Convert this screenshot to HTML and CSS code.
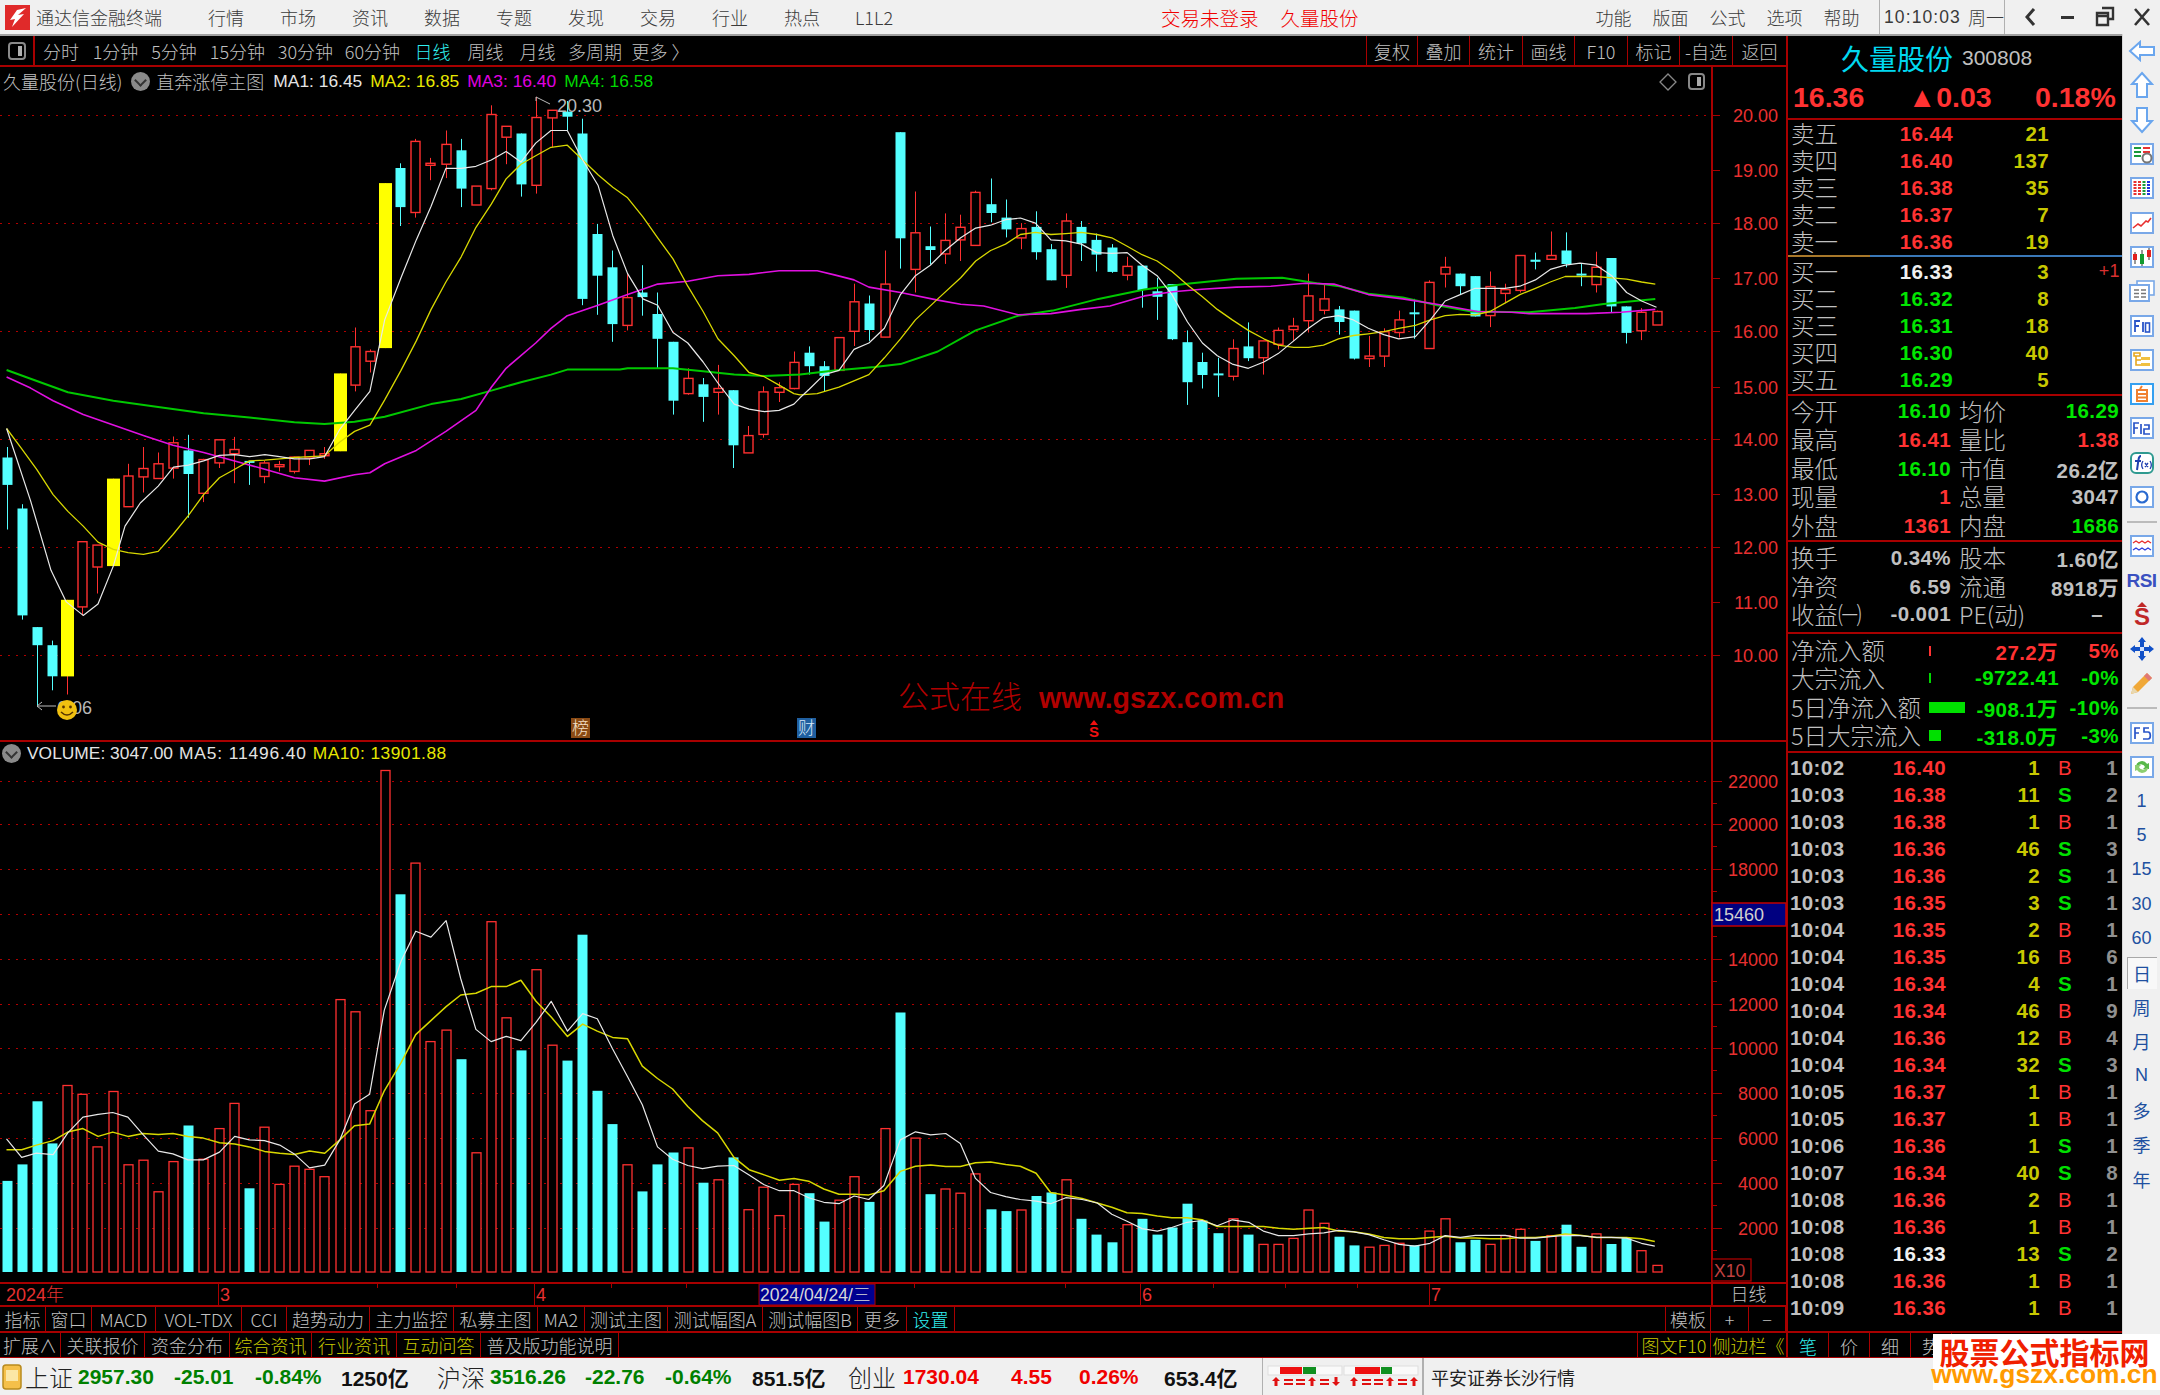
FILE: index.html
```html
<!DOCTYPE html>
<html lang="zh">
<head>
<meta charset="utf-8">
<title>通达信金融终端</title>
<link rel="stylesheet" href="styles.css">
</head>
<body>
<div class="app">
  <header class="titlebar">
    <svg class="logo" viewBox="0 0 25 25"><rect width="25" height="25" fill="#e02a2a"/><path d="M21 3 L12 5 L5 15 L10 14 L7 22 L19 9 L13 10 Z" fill="#fff"/></svg>
    <span class="appname">通达信金融终端</span>
    <nav class="menu"><span>行情</span><span>市场</span><span>资讯</span><span>数据</span><span>专题</span><span>发现</span><span>交易</span><span>行业</span><span>热点</span><span>L1L2</span></nav>
    <div class="notice"><span>交易未登录</span><span>久量股份</span></div>
    <nav class="rmenu"><span>功能</span><span>版面</span><span>公式</span><span>选项</span><span>帮助</span></nav>
    <div class="clock"><span>10:10:03</span><span class="clock-day">周一</span></div>
    <div class="winctl">
      <svg viewBox="0 0 20 24"><path d="M13 4 L6 12 L13 20" fill="none" stroke="#333" stroke-width="3"/></svg>
      <svg viewBox="0 0 20 24"><rect x="3" y="11" width="13" height="3" fill="#333"/></svg>
      <svg viewBox="0 0 20 24"><path d="M7 3h11v11h-4M2 8h11v12H2z M2 8h11v3H2z" fill="none" stroke="#333" stroke-width="2.4"/></svg>
      <svg viewBox="0 0 20 24"><path d="M3 4 L17 20 M17 4 L3 20" stroke="#333" stroke-width="2.6"/></svg>
    </div>
  </header>

  <div class="workspace">
    <section class="left">
      <div class="toolbar">
        <div class="tb-icon"><svg viewBox="0 0 18 18"><rect x="1" y="1" width="16" height="16" rx="3" fill="none" stroke="#8a8a8a" stroke-width="2"/><rect x="10" y="4" width="4" height="10" fill="#b0b0b0"/></svg></div>
        <div class="periods"><span>分时</span><span>1分钟</span><span>5分钟</span><span>15分钟</span><span>30分钟</span><span>60分钟</span><span class="on">日线</span><span>周线</span><span>月线</span><span>多周期</span><span>更多 〉</span></div>
        <div class="tb-right"><span>复权</span><span>叠加</span><span>统计</span><span>画线</span><span>F10</span><span>标记</span><span>-自选</span><span>返回</span></div>
      </div>

      <div class="pane pane-main">
        <svg id="mainChart" class="chart" viewBox="0 67 1786 673"></svg>
        <div class="legend">
          <span class="stock">久量股份(日线)</span>
          <i class="dot"></i>
          <span class="stock formula">直奔涨停主图</span>
          <span class="ma c-w">MA1: 16.45</span><span class="ma c-y">MA2: 16.85</span><span class="ma c-m">MA3: 16.40</span><span class="ma c-g">MA4: 16.58</span>
        </div>
      </div>

      <div class="pane pane-vol">
        <svg id="volChart" class="chart" viewBox="0 740 1786 542"></svg>
        <div class="legend legend-vol">
          <i class="dot"></i>
          <span class="ma c-w">VOLUME: 3047.00</span><span class="ma c-w wider">MA5: 11496.40</span><span class="ma c-y wide">MA10: 13901.88</span>
        </div>
      </div>

      <svg id="timeAxis" class="time-axis" viewBox="0 1282 1786 23"></svg>

      <div class="tabrow tabs-a">
        <span>指标</span><span>窗口</span><span>MACD</span><span>VOL-TDX</span><span>CCI</span><span>趋势动力</span><span>主力监控</span><span>私募主图</span><span>MA2</span><span>测试主图</span><span>测试幅图A</span><span>测试幅图B</span><span>更多</span><span class="on">设置</span><span class="blank"></span><span>模板</span><span>+</span><span>−</span>
      </div>
      <div class="tabrow tabs-b">
        <span>扩展∧</span><span>关联报价</span><span>资金分布</span><span class="yl">综合资讯</span><span class="yl">行业资讯</span><span class="yl">互动问答</span><span>普及版功能说明</span><span class="blank"></span><span class="yl">图文F10</span><span class="yl last">侧边栏《</span>
      </div>
    </section>

    <aside class="quote">
      <div class="stock-head">
        <div class="name-row"><span class="q-name">久量股份</span><span class="q-code">300808</span></div>
        <div class="price-row"><span>16.36</span><span>▲0.03</span><span>0.18%</span></div>
      </div>

      <div class="book">
        <div class="brow"><b>卖五</b><span class="r">16.44</span><span class="q">21</span></div>
        <div class="brow"><b>卖四</b><span class="r">16.40</span><span class="q">137</span></div>
        <div class="brow"><b>卖三</b><span class="r">16.38</span><span class="q">35</span></div>
        <div class="brow"><b>卖二</b><span class="r">16.37</span><span class="q">7</span></div>
        <div class="brow"><b>卖一</b><span class="r">16.36</span><span class="q">19</span></div>
      </div>
      <div class="book-sep"><i></i><i></i></div>
      <div class="book book-buy">
        <div class="brow"><b>买一</b><span class="w">16.33</span><span class="q">3</span><span class="delta">+1</span></div>
        <div class="brow"><b>买二</b><span class="g">16.32</span><span class="q">8</span></div>
        <div class="brow"><b>买三</b><span class="g">16.31</span><span class="q">18</span></div>
        <div class="brow"><b>买四</b><span class="g">16.30</span><span class="q">40</span></div>
        <div class="brow"><b>买五</b><span class="g">16.29</span><span class="q">5</span></div>
      </div>

      <div class="stats">
        <div class="srow"><b>今开</b><span class="g">16.10</span><b>均价</b><span class="g">16.29</span></div>
        <div class="srow"><b>最高</b><span class="r">16.41</span><b>量比</b><span class="r">1.38</span></div>
        <div class="srow"><b>最低</b><span class="g">16.10</span><b>市值</b><span class="n">26.2亿</span></div>
        <div class="srow"><b>现量</b><span class="r">1</span><b>总量</b><span class="n">3047</span></div>
        <div class="srow"><b>外盘</b><span class="r">1361</span><b>内盘</b><span class="g">1686</span></div>
      </div>
      <div class="stats stats-b">
        <div class="srow"><b>换手</b><span class="n">0.34%</span><b>股本</b><span class="n">1.60亿</span></div>
        <div class="srow"><b>净资</b><span class="n">6.59</span><b>流通</b><span class="n">8918万</span></div>
        <div class="srow"><b class="nowrap">收益㈠</b><span class="n">-0.001</span><b class="nowrap">PE(动)</b><span class="n none">–</span></div>
      </div>

      <div class="flows">
        <div class="frow"><b>净流入额</b><i class="bar bar-r1"></i><span class="r">27.2万</span><span class="r">5%</span></div>
        <div class="frow"><b>大宗流入</b><i class="bar bar-g1"></i><span class="g">-9722.41</span><span class="g">-0%</span></div>
        <div class="frow"><b>5日净流入额</b><i class="bar bar-g2"></i><span class="g">-908.1万</span><span class="g">-10%</span></div>
        <div class="frow"><b>5日大宗流入</b><i class="bar bar-g3"></i><span class="g">-318.0万</span><span class="g">-3%</span></div>
      </div>

      <div class="trades" id="trades"></div>

      <div class="q-tabs"><span class="on">笔</span><span>价</span><span>细</span><span>势</span></div>
    </aside>

    <aside class="side">
      <div class="si"><svg width="28" height="22" viewBox="0 0 28 22"><path class="ar" d="M2 11 L12 2 V7 H26 V15 H12 V20 Z"/></svg></div>
      <div class="si"><svg width="24" height="28" viewBox="0 0 24 28"><path class="ar" d="M12 2 L22 13 H17 V26 H7 V13 H2 Z"/></svg></div>
      <div class="si"><svg width="24" height="28" viewBox="0 0 24 28"><path class="ar" d="M12 26 L22 15 H17 V2 H7 V15 H2 Z"/></svg></div>
      <div class="si"><svg width="24" height="24" viewBox="0 0 24 24"><rect class="box" x="1" y="2" width="22" height="20"/><path d="M4 6h7M4 10h7M4 14h7" stroke="#1a9a3a" stroke-width="2"/><path d="M13 6h7M13 10h7" stroke="#e83030" stroke-width="2"/><circle cx="17" cy="16" r="4.5" fill="none" stroke="#777" stroke-width="2"/></svg></div>
      <div class="si"><svg width="24" height="24" viewBox="0 0 24 24"><rect class="box" x="1" y="2" width="22" height="20"/><path d="M5 5v14" stroke="#e83030" stroke-width="3" stroke-dasharray="2 1"/><path d="M9.5 5v14" stroke="#e83030" stroke-width="3" stroke-dasharray="2 1"/><path d="M14 5v14" stroke="#1a9a3a" stroke-width="3" stroke-dasharray="2 1"/><path d="M18.5 5v14" stroke="#2030e0" stroke-width="3" stroke-dasharray="2 1"/></svg></div>
      <div class="si"><svg width="24" height="24" viewBox="0 0 24 24"><rect class="box" x="1" y="2" width="22" height="20"/><path d="M3 17 L8 13 L11 15 L16 10 L18 11 L21 7" fill="none" stroke="#e83030" stroke-width="1.6"/></svg></div>
      <div class="si"><svg width="24" height="24" viewBox="0 0 24 24"><rect class="box" x="1" y="2" width="22" height="20"/><path d="M5 7v12M12 5v16M19 3v12" stroke="#333" stroke-width="1"/><rect x="3" y="9" width="4" height="6" fill="#e02020"/><rect x="10" y="9" width="4" height="10" fill="#129a30"/><rect x="17" y="5" width="4" height="7" fill="#e02020"/></svg></div>
      <div class="si"><svg width="26" height="22" viewBox="0 0 26 22"><rect x="8" y="1" width="17" height="14" fill="#fff" stroke="#79a8e8" stroke-width="1.6"/><rect class="box" x="1" y="5" width="19" height="16"/><path d="M5 10h5M12 10h5M5 13.5h5M12 13.5h5M5 17h5M12 17h5" stroke="#777" stroke-width="1.6"/></svg></div>
      <div class="si"><svg width="24" height="24" viewBox="0 0 24 24"><rect class="box" x="1" y="2" width="22" height="20"/><path d="M5 18V7h5M5 12h4M13 8v10" fill="none" stroke="#2a55c8" stroke-width="1.8"/><rect x="15.5" y="9" width="4" height="9" fill="none" stroke="#2a55c8" stroke-width="1.6"/></svg></div>
      <div class="si"><svg width="24" height="24" viewBox="0 0 24 24"><rect class="box" x="1" y="2" width="22" height="20"/><path d="M4 5h6v3H4zM6 8v9h5M6 12h5" fill="none" stroke="#e8a820" stroke-width="1.6"/><rect x="11" y="9" width="9" height="3" fill="#f0c040"/><rect x="11" y="15" width="9" height="3" fill="#f0c040"/></svg></div>
      <div class="si"><svg width="24" height="24" viewBox="0 0 24 24"><rect x="1" y="2" width="22" height="20" fill="#fff" stroke="#35a0f0" stroke-width="2"/><path d="M12 4 L10 7 M7 8h10v11H7zM7 12h10M7 15.5h10" fill="none" stroke="#f08030" stroke-width="2"/></svg></div>
      <div class="si"><svg width="24" height="24" viewBox="0 0 24 24"><rect class="box" x="1" y="2" width="22" height="20"/><path d="M4 18V7h5M4 12h4M11 8v10M14 9h5v4h-5v5h6" fill="none" stroke="#2a55c8" stroke-width="1.7"/></svg></div>
      <div class="si"><svg width="24" height="24" viewBox="0 0 24 24"><rect x="1" y="2" width="22" height="20" rx="5" fill="#fff" stroke="#2f9a90" stroke-width="2"/><path d="M11 5C8 5 9 8 8 12L7 19M5 10h6" fill="none" stroke="#2040b0" stroke-width="2"/><path d="M13 10c-2 3-2 5 0 8M20 10c2 3 2 5 0 8M15 12l3 4M18 12l-3 4" fill="none" stroke="#2040b0" stroke-width="1.3"/></svg></div>
      <div class="si"><svg width="24" height="24" viewBox="0 0 24 24"><rect class="box" x="1" y="2" width="22" height="20"/><circle cx="12" cy="12" r="5.5" fill="none" stroke="#2a6ad0" stroke-width="2.2"/></svg></div>
      <div class="side-sep"></div>
      <div class="si"><svg width="24" height="22" viewBox="0 0 24 22"><rect class="box" x="1" y="1" width="22" height="20"/><path d="M3 8l3-2 3 2 3-2 3 2 3-2 3 2" fill="none" stroke="#e83030" stroke-width="1.4"/><path d="M3 15l3-2 3 2 3-2 3 2 3-2 3 2" fill="none" stroke="#3040e0" stroke-width="1.4"/></svg></div>
      <div class="si si-rsi">RSI</div>
      <div class="si"><svg width="22" height="28" viewBox="0 0 22 28"><path d="M11 1 L16 6 H6 Z" fill="#c02828"/><text x="11" y="24" class="dollar">S</text></svg></div>
      <div class="si"><svg width="24" height="24" viewBox="0 0 24 24"><path d="M12 0 L16 5 H14 V10 H19 V8 L24 12 L19 16 V14 H14 V19 H16 L12 24 L8 19 H10 V14 H5 V16 L0 12 L5 8 V10 H10 V5 H8 Z" fill="#1050c8"/><rect x="10" y="10" width="4" height="4" fill="#cfe0ff"/></svg></div>
      <div class="si"><svg width="24" height="24" viewBox="0 0 24 24"><path d="M1 23 L3 16 L17 2 L22 7 L8 21 Z" fill="#f0a838"/><path d="M17 2 L22 7 L19 10 L14 5 Z" fill="#e07878"/><path d="M1 23 L3 16 L8 21 Z" fill="#e8d8b0"/></svg></div>
      <div class="side-sep"></div>
      <div class="si"><svg width="24" height="24" viewBox="0 0 24 24"><rect class="box" x="1" y="2" width="22" height="20"/><path d="M5 18V7h5M5 12h4M19 7h-5v4h4a2 3 0 0 1 0 7h-5" fill="none" stroke="#2a55c8" stroke-width="1.7"/></svg></div>
      <div class="si"><svg width="24" height="22" viewBox="0 0 24 22"><rect class="box" x="1" y="1" width="22" height="20"/><path d="M6 10a6 6 0 0 1 11-2l2-1v6h-6l2-2a4 4 0 0 0-7-1z" fill="#58b84a"/><path d="M18 12a6 6 0 0 1-11 2l-2 1V9h6L9 11a4 4 0 0 0 7 1z" fill="#8ccf70"/></svg></div>
      <div class="si t">1</div><div class="si t">5</div><div class="si t">15</div><div class="si t">30</div><div class="si t">60</div>
      <div class="si t active"><span>日</span></div>
      <div class="si t">周</div><div class="si t">月</div><div class="si t">N</div><div class="si t">多</div><div class="si t">季</div><div class="si t">年</div>
    </aside>
  </div>

  <footer class="status">
    <svg class="st-icon" viewBox="0 0 20 26"><rect x="1" y="1" width="18" height="24" rx="3" fill="#f5c04a" stroke="#b88a1e" stroke-width="1.5"/><rect x="4" y="6" width="12" height="11" fill="#fbe7a6"/></svg>
    <div class="tick">
      <span class="l">上证</span><span class="gn">2957.30</span><span class="gn">-25.01</span><span class="gn">-0.84%</span><span class="bk">1250亿</span>
      <span class="l">沪深</span><span class="gn">3516.26</span><span class="gn">-22.76</span><span class="gn">-0.64%</span><span class="bk">851.5亿</span>
      <span class="l">创业</span><span class="rd">1730.04</span><span class="rd">4.55</span><span class="rd">0.26%</span><span class="bk">653.4亿</span>
    </div>
    <svg class="mini" viewBox="0 0 162 37">
      <defs>
        <path id="mu" d="M4 0l4 4H5.5v5h-3V4H0z" fill="#e01010"/>
        <path id="md" d="M4 9l4-4H5.5V0h-3v5H0z" fill="#e01010"/>
        <path id="me" d="M0 2h9v2H0zM0 6h9v2H0z" fill="#e01010"/>
      </defs>
      <path d="M0 0V37M161 0V37" stroke="#9a9a9a" stroke-width="1.5"/>
      <rect x="6" y="8" width="74" height="9" fill="#fafafa" stroke="#ddd"/><rect x="18" y="9" width="22" height="7" fill="#ee1010"/><rect x="41" y="9" width="13" height="7" fill="#109020"/>
      <rect x="82" y="8" width="74" height="9" fill="#fafafa" stroke="#ddd"/><rect x="93" y="9" width="25" height="7" fill="#ee1010"/><rect x="119" y="9" width="11" height="7" fill="#109020"/>
      <use href="#mu" x="10" y="19"/><use href="#me" x="22" y="19"/><use href="#me" x="34" y="19"/><use href="#mu" x="46" y="19"/><use href="#me" x="58" y="19"/><use href="#md" x="70" y="19"/>
      <use href="#mu" x="88" y="19"/><use href="#me" x="100" y="19"/><use href="#me" x="112" y="19"/><use href="#mu" x="124" y="19"/><use href="#me" x="136" y="19"/><use href="#mu" x="148" y="19"/>
    </svg>
    <span class="broker">平安证券长沙行情</span>
  </footer>

  <div class="brand">
    <span class="brand-cn">股票公式指标网</span>
    <span class="brand-en">www.gszx.com.cn</span>
  </div>
</div>
<script src="app.js"></script>
</body>
</html>
```
FILE: styles.css
```css
*{box-sizing:border-box;margin:0;padding:0}
html,body{width:2160px;height:1395px;overflow:hidden;background:#f0f0f0}
body{font-family:"Noto Sans CJK SC","Liberation Sans",sans-serif;font-weight:300;font-size:18px;color:#c0c0c0}
b,i{font-style:normal;font-weight:300}
.app{position:relative;width:2160px;height:1395px;display:flex;flex-direction:column}

/* title bar */
.titlebar{height:36px;flex:none;display:flex;align-items:center;background:#f0f0f0;border-bottom:2px solid #a0a0a0;color:#3a3a3a;white-space:nowrap;font-size:18px}
.logo{width:25px;height:25px;margin-left:5px;flex:none}
.appname{margin-left:6px;width:126px}
.menu{margin-left:28px;display:grid;grid-template-columns:repeat(10,72px);text-align:center}
.notice{margin-left:251px;display:flex;gap:22px;color:#f00000;font-size:19.5px}
.rmenu{margin-left:auto;padding-right:9px;display:grid;grid-template-columns:repeat(5,57px);text-align:center}
.clock{width:126px;height:34px;display:flex;align-items:center;gap:7px;padding-left:4px;border-left:1px solid #b0b0b0;border-right:1px solid #b0b0b0;font-family:"Liberation Sans","Noto Sans CJK SC",sans-serif;font-size:17.5px;letter-spacing:1.1px;font-weight:400}
.clock-day{font-family:"Noto Sans CJK SC",sans-serif;letter-spacing:0;font-size:18px;font-weight:300}
.winctl{width:155px;display:grid;grid-template-columns:repeat(4,37px);justify-items:center;padding-left:7px}
.winctl svg{width:20px;height:24px}

/* layout */
.workspace{height:1322px;flex:none;display:flex;background:#000}
.left{width:1786px;display:flex;flex-direction:column;flex:none;background:#000}
.toolbar{height:31px;flex:none;display:flex;align-items:stretch;border-bottom:2px solid #a80000;white-space:nowrap}
.tb-icon{width:35px;display:flex;align-items:center;justify-content:center;border-right:2px solid #a80000}
.tb-icon svg{width:18px;height:18px}
.periods{display:grid;grid-template-columns:52px 57px 60px 67px 69px 65px 55px 51px 53px 62px 69px;text-align:center;align-items:center}
.periods .on{color:#30f0f0}
.tb-right{margin-left:auto;display:grid;grid-template-columns:51px 52px 53px 52px 53px 52px 53px 54px;text-align:center}
.tb-right span{border-left:1px solid #a80000;display:flex;align-items:center;justify-content:center}

/* chart panes */
.pane{position:relative;flex:none}
.pane-main{height:673px}
.pane-vol{height:542px}
.chart{display:block;width:1786px;height:100%;overflow:visible}
.legend{position:absolute;left:3px;top:0;height:28px;display:flex;align-items:center;white-space:nowrap}
.legend .stock{font-size:18px}
.legend .dot,.legend-vol .dot{width:19px;height:19px;border-radius:50%;background:#8a8a8a;margin:0 6px 0 9px;position:relative;flex:none}
.legend .dot::after{content:"";position:absolute;left:5px;top:4px;width:7px;height:7px;border-right:2px solid #333;border-bottom:2px solid #333;transform:rotate(45deg)}
.legend .formula{margin-right:9px}
.ma{font:400 17.4px "Liberation Sans",sans-serif;margin-right:8px}
.ma.wide{letter-spacing:.45px}
.ma.wider{letter-spacing:.85px}
.legend-vol{left:0;height:26px;top:0}
.legend-vol .ma{margin-right:6px}
.legend-vol .dot{margin:0 6px 0 2px}
.c-w{color:#e4e4e4}.c-y{color:#e8e800}.c-m{color:#e000e0}.c-g{color:#00d800}
.time-axis{display:block;width:1786px;height:23px;flex:none;overflow:visible}

/* bottom tabs */
.tabrow{display:grid;white-space:nowrap;text-align:center;align-items:stretch;border-top:2px solid #a80000;flex:none}
.tabrow span{display:flex;align-items:center;justify-content:center;border-right:1px solid #a80000;overflow:hidden}
.tabrow .blank{border-right:1px solid #a80000}
.tabrow .on{color:#30f0f0}
.tabrow .yl{color:#c8c800}
.tabs-a{height:26px;grid-template-columns:46px 46px 64px 86px 45px 83px 84px 84px 47px 83px 95px 95px 49px 48px 711px 45px 38px 37px}
.tabs-b{height:27px;border-bottom:1px solid #a80000;grid-template-columns:61px 84px 85px 82px 85px 84px 138px 1019px 73px 75px}
.tabs-b .last{border-right:0}

/* quote panel */
.quote{width:336px;flex:none;display:flex;flex-direction:column;border-left:2px solid #a80000;background:#000;white-space:nowrap}
.stock-head{height:84px;flex:none;border-bottom:2px solid #a80000;font-family:"Liberation Sans","Noto Sans CJK SC",sans-serif}
.name-row{height:44px;display:flex;align-items:center;padding-left:53px;gap:9px}
.q-name{font:400 28px "Noto Sans CJK SC",sans-serif;color:#00d8f0}
.q-code{font-size:21px;color:#c0c0c0;font-weight:400}
.price-row{height:35px;display:grid;grid-template-columns:115px 127px auto;align-items:center;padding-left:5px;color:#ff3232;font-weight:700;font-size:28.5px}
.book{display:flex;flex-direction:column;flex:none}
.book-buy{padding:1px 0}
.brow,.srow,.frow,.trow{display:grid;align-items:center;font:700 20.5px "Liberation Sans","Noto Sans CJK SC",sans-serif;letter-spacing:.4px}
.brow b,.srow b,.frow b{font:300 23.5px "Noto Sans CJK SC",sans-serif;color:#c0c0c0;letter-spacing:0;line-height:1}
.brow{height:27px;flex:none;grid-template-columns:56px 106px 96px 71px;padding-left:3px}
.brow span,.srow span,.frow span{text-align:right}
.book-sep{height:2px;display:grid;grid-template-columns:82px 1fr;flex:none}
.book-sep i:first-child{background:#a8782a}
.book-sep i:last-child{background:#3a78b8}
.stats{border-top:2px solid #a80000;padding-top:1px;display:flex;flex-direction:column;flex:none}
.srow{height:28.6px;flex:none;grid-template-columns:52px 108px 8px 52px 108px;padding-left:3px}
.srow b:nth-of-type(2){grid-column:4}
.stats-b{padding-bottom:3px}
.stats b.nowrap{white-space:nowrap;overflow:visible}
.n.none{padding-right:16px}
.flows{border-top:2px solid #a80000;border-bottom:2px solid #a80000;padding:2px 0;flex:none}
.frow{height:28.4px;grid-template-columns:138px 46px 83px 61px;padding-left:3px}
.bar{display:block}
.bar-r1{width:2px;height:10px;background:#ff3232}
.bar-g1{width:2px;height:10px;background:#00d800}
.bar-g2{width:36px;height:11px;background:#00e000}
.bar-g3{width:12px;height:11px;background:#00e000}
.r{color:#ff3232}.g{color:#00e600}.w{color:#f0f0f0}.q{color:#c8c800}.n{color:#c0c0c0}
.delta{font-weight:400;font-size:18px;color:#d83030}
.trades{flex:1;display:flex;flex-direction:column;min-height:0;padding-top:1px}
.trow{height:27px;flex:none;grid-template-columns:60px 96px 94px 17px 16px auto;padding-left:2px}
.trow .tm{color:#c0c0c0}
.trow .pr{text-align:right}
.trow .qt{text-align:right;color:#c8c800}
.trow .bs{grid-column:5;text-align:center}
.trow .bs-b{color:#ff3232;font-weight:400}
.trow .bs-s{color:#00e000}
.trow .cn{text-align:right;color:#909090;padding-right:4px}
.q-tabs{height:27px;flex:none;display:grid;grid-template-columns:repeat(4,41px) 1fr;border-top:2px solid #a80000;border-bottom:1px solid #a80000;text-align:center;font-size:18px}
.q-tabs span{border-right:1px solid #a80000;display:flex;align-items:center;justify-content:center}
.q-tabs .on{color:#30f0f0}

/* side strip */
.side{width:38px;flex:none;margin-top:-2px;background:#f0f0f0;display:flex;flex-direction:column;align-items:center;color:#2050a0;border-left:1px solid #d8d8d8}
.si{height:34.3px;width:100%;display:flex;align-items:center;justify-content:center;flex:none}
.side-sep{height:15px;flex:none;width:30px;background:linear-gradient(#bbb,#bbb) center/100% 2px no-repeat}
.ar{fill:#fff;stroke:#6aa6ee;stroke-width:2}
.box{fill:#fff;stroke:#79a8e8;stroke-width:2}
.si-rsi{font:700 19px "Liberation Sans",sans-serif;color:#3a50c0;letter-spacing:-.5px}
.dollar{font:700 24px "Liberation Sans",sans-serif;fill:#c02828;text-anchor:middle}
.si.t{font:400 18px "Liberation Sans","Noto Sans CJK SC",sans-serif}
.active span{width:30px;height:32px;display:flex;align-items:center;justify-content:center;background:#f8f8f8;border-top:1px solid #a8a8a8;border-left:1px solid #a8a8a8}

/* status */
.status{height:37px;flex:none;display:flex;align-items:center;background:#f0f0f0;white-space:nowrap;position:relative}
.st-icon{width:20px;height:26px;margin-left:2px;flex:none}
.tick{margin-left:3px;display:grid;grid-template-columns:53px 96px 81px 86px 96px 53px 95px 80px 87px 96px 55px 108px 68px 85px 98px;align-items:center;font:700 21px "Liberation Sans","Noto Sans CJK SC",sans-serif}
.tick .l{font:300 24px "Noto Sans CJK SC",sans-serif;color:#222}
.gn{color:#008000}.rd{color:#f00000}.bk{color:#111}
.mini{width:162px;height:37px;flex:none}
.broker{margin-left:7px;color:#222;font-size:18px;font-weight:400}
.brand{position:absolute;right:0;bottom:5px;width:227px;height:56px;padding:2px 4px 0 0;background:#fff;display:flex;flex-direction:column;align-items:center;line-height:1}
.brand-cn{font:700 30px/30px "Noto Sans CJK SC",sans-serif;color:#f02000;white-space:nowrap}
.brand-en{font:700 26.4px/16px "Liberation Sans",sans-serif;color:#ff9a00;white-space:nowrap}
```
FILE: app.js
```js
var RED='#ff3030',CY='#54ffff',YL='#ffff00',LINE='#a80000';
function my(p){return 80+p/2.376}
function vy(p){return 740+p/2.851}
function cx(i){return Math.round(6.6+15.137*i)+.5}
function m7(a){var o=[];for(var i=0;i<a.length;i+=2)o.push((a[i]/1.96).toFixed(1)+','+my(a[i+1]).toFixed(1));return o}
function m8(a){var o=[];for(var i=0;i<a.length;i+=2)o.push((800+a[i]/1.742).toFixed(1)+','+my(a[i+1]).toFixed(1));return o}
function v9(a){var o=[];for(var i=0;i<a.length;i+=2)o.push((a[i]/1.845).toFixed(1)+','+vy(a[i+1]).toFixed(1));return o}
function v10(a){var o=[];for(var i=0;i<a.length;i+=2)o.push((850+a[i]/1.65).toFixed(1)+','+vy(a[i+1]).toFixed(1));return o}
function poly(pts,c,w){return '<polyline points="'+pts.join(' ')+'" fill="none" stroke="'+c+'" stroke-width="'+w+'" stroke-linejoin="round"/>'}

var candles=[
['c',872,897,962,1068],['c',1008,1018,1272,1282],['c',1300,1300,1343,1490],['c',1332,1343,1417,1450],['y',1235,1235,1417,1460],
['r',1097,1097,1252,1272],['r',1105,1105,1157,1220],['y',947,947,1155,1155],['r',912,941,1014,1014],['r',872,923,943,980],
['r',885,912,947,947],['r',847,862,922,947],['c',843,880,936,1040],['r',900,902,982,1003],['r',855,855,910,922],
['r',848,878,888,958],['c',905,905,908,962],['r',905,910,942,958],['r',905,914,916,930],['r',895,896,930,935],
['r',880,880,898,915],['r',872,888,890,900],['y',697,697,882,882],['r',588,634,725,740],['r',640,645,668,695],
['y',245,245,637,637],['c',198,209,302,347],['r',140,146,315,327],['r',185,198,200,238],['r',120,153,200,233],
['c',140,167,258,302],['r',252,252,297,297],['r',60,82,258,262],['r',110,110,136,200],['c',127,127,248,277],
['r',40,89,250,270],['r',72,72,90,160],['c',50,75,87,120],['c',92,127,520,535],['c',342,366,465,558],
['c',405,445,580,622],['r',462,517,583,595],['c',440,505,516,560],['c',505,556,615,685],['c',622,622,762,795],
['r',685,709,745,748],['c',708,723,753,812],['r',677,733,742,795],['c',737,737,868,922],['r',822,845,886,886],
['r',728,741,842,850],['r',718,731,742,765],['r',645,671,733,735],
['c',633,648,680,700],['c',668,680,703,740],['r',612,612,690,690],['r',484,527,597,632],['c',512,531,594,620],
['r',405,485,611,611],['c',124,124,376,448],['r',265,363,450,505],['c',348,395,404,438],['r',317,381,413,437],
['r',320,350,380,430],['r',263,267,393,393],['c',234,295,316,338],['c',284,327,355,374],['r',340,353,375,402],
['c',312,349,409,427],['c',390,402,476,476],['r',317,335,464,494],['c',335,349,388,430],['c',365,380,415,455],
['c',390,398,456,458],['r',420,443,464,476],['c',441,441,499,541],['c',470,502,515,570],['c',485,485,616,618],
['c',595,623,718,772],['c',648,670,701,733],['c',660,697,700,753],['r',616,638,704,714],['c',576,633,661,668],
['r',620,620,660,700],['r',588,595,628,640],['r',565,585,593,620],['r',460,513,572,600],['r',484,520,547,557],
['c',537,545,575,605],['c',548,548,662,664],['r',608,656,662,682],['r',590,598,656,682],['r',548,570,600,612],
['c',520,552,554,615],['r',476,481,638,638],['r',420,445,461,493],['c',460,460,490,510],['c',466,466,562,562],
['r',455,491,560,587],['r',484,498,507,530],['r',417,417,500,505],['c',410,427,432,450],['r',360,417,426,426],
['c',362,405,437,445],['c',435,460,462,490],['r',408,445,486,505],['c',423,423,538,552],['c',538,538,601,626],
['r',542,552,596,618],['r',548,550,582,582]];

var ma1=m7([13,828,60,1000,100,1165,130,1240,163,1272,192,1245,222,1155,245,1060,275,1005,310,965,340,920,369,915,399,905,430,892,460,890,489,895,519,890,548,895,577,900,607,900,636,895,666,830,695,785,725,740,754,570,786,470,816,380,845,300,874,210,904,210,933,205,963,190,992,170,1021,195,1050,150,1080,120,1112,120,1142,190,1172,250,1201,370,1230,460,1260,520,1289,535,1319,600,1348,625,1378,670,1407,720,1439,770,1468,782,1498,788,1527,785,1556,770])
.concat(m8([0,755,16,735,42,700,68,690,94,640,120,625,147,590,175,510,201,465,227,440,253,405,280,375,306,352,332,345,358,332,384,328,410,340,437,380,463,382,490,390,517,410,543,412,570,410,596,440,622,465,648,510,675,575,701,625,727,655,753,675,781,685,808,670,833,650,860,620,886,590,912,565,938,560,964,570,990,590,1017,605,1043,615,1072,610,1098,570,1124,525,1150,510,1176,495,1202,495,1228,495,1254,490,1281,475,1307,450,1333,440,1359,435,1387,440,1414,465,1440,505,1466,525,1492,540]));
var ma2=m7([13,828,42,875,72,925,104,985,133,1025,163,1060,192,1098,222,1115,251,1123,281,1127,310,1120,339,1080,369,1035,399,985,430,945,460,925,489,905,519,903,548,900,577,897,607,895,636,893,666,860,695,835,725,820,754,760,786,690,816,620,845,545,874,480,904,420,933,350,963,295,992,235,1021,200,1050,180,1080,160,1112,155,1142,190,1172,225,1201,255,1230,280,1260,325,1289,375,1319,425,1348,490,1378,550,1407,615,1439,655,1468,695,1498,705,1527,725,1556,745])
.concat(m8([0,748,30,745,68,730,120,700,147,660,175,615,201,570,240,520,280,470,306,430,332,405,358,390,384,367,410,362,437,367,463,365,490,362,517,367,543,375,570,395,596,415,622,430,648,455,675,487,701,515,727,545,753,570,781,595,808,615,833,630,860,635,886,635,912,630,938,615,964,607,990,603,1017,598,1043,590,1072,583,1098,570,1124,560,1150,557,1176,558,1202,550,1228,530,1254,510,1281,495,1307,480,1333,467,1359,467,1387,467,1414,470,1440,473,1466,480,1490,485]));
var ma3=m7([13,706,60,732,104,762,163,795,222,820,281,845,339,868,399,885,460,905,519,925,577,945,636,953,695,938,725,933,754,912,816,880,874,835,933,785,963,730,992,685,1050,625,1080,590,1112,560,1172,535,1230,510,1289,485,1348,478,1407,465,1468,462,1527,453,1568,453])
.concat(m8([30,453,60,463,94,475,120,492,175,505,240,523,280,533,320,537,380,558,437,555,490,545,540,537,600,513,650,503,700,497,760,492,820,490,880,483,930,485,990,510,1050,520,1120,535,1180,550,1240,552,1270,555,1370,555,1430,552,1490,545]));
var ma4=m7([13,689,60,710,133,742,222,762,310,777,399,792,489,802,577,813,636,817,695,812,754,800,845,770,904,758,963,738,1021,718,1080,700,1112,688,1215,688,1230,685,1319,685,1378,692,1439,700,1498,703,1568,700])
.concat(m8([60,690,130,682,175,675,240,645,306,595,380,560,440,548,520,520,600,498,670,485,760,472,840,470,900,483,940,490,990,508,1050,517,1110,535,1170,550,1270,552,1350,542,1400,532,1490,520]));

function drawMain(){
  var h='';
  var grid=[115,223,331,439,547,655];
  grid.forEach(function(y){h+='<line x1="0" x2="1711" y1="'+y+'.5" y2="'+y+'.5" stroke="#b00000" stroke-dasharray="2 6"/>'});
  candles.forEach(function(c,i){
    var x=cx(i),col=c[0]=='c'?CY:RED,top=my(c[2]),bot=my(c[3]);
    var wk=c[0]=='y'?RED:col;
    h+='<line x1="'+x+'" x2="'+x+'" y1="'+my(c[1]).toFixed(1)+'" y2="'+my(c[4]).toFixed(1)+'" stroke="'+wk+'"/>';
    var ht=Math.max(bot-top,2).toFixed(1);
    if(c[0]=='c')h+='<rect x="'+(x-5)+'" y="'+top.toFixed(1)+'" width="10" height="'+ht+'" fill="'+CY+'"/>';
    else if(c[0]=='y')h+='<rect x="'+(x-6.5)+'" y="'+top.toFixed(1)+'" width="13" height="'+ht+'" fill="'+YL+'"/>';
    else h+='<rect x="'+(x-4.5)+'" y="'+top.toFixed(1)+'" width="9" height="'+ht+'" fill="#000" stroke="'+RED+'" stroke-width="1.4"/>';
  });
  h+=poly(ma4,'#00c800',2)+poly(ma3,'#e010e0',1.6)+poly(ma2,'#d8d800',1.3)+poly(ma1,'#e8e8e8',1.2);
  // axis
  h+='<rect x="1711" y="67" width="2" height="673" fill="'+LINE+'"/>';
  var labs=[[20,115],[19,170],[18,223],[17,278],[16,331],[15,387],[14,439],[13,494],[12,547],[11,602],[10,655]];
  labs.forEach(function(l){
    h+='<line x1="1713" x2="1720" y1="'+l[1]+'.5" y2="'+l[1]+'.5" stroke="'+LINE+'"/>';
    h+='<text class="axis" x="1778" y="'+(l[1]+7)+'" text-anchor="end" font-family="Liberation Sans" font-size="18" fill="#e83030">'+l[0]+'.00</text>';
  });
  // price flags
  h+='<path d="M536 101V97L550 104" fill="none" stroke="#bbb"/><text x="557" y="112" font-family="Liberation Sans" font-size="18" fill="#b8b8b8">20.30</text>';
  h+='<path d="M37 706L42 702M37 706L42 710M37 706H56" fill="none" stroke="#bbb"/><text x="57" y="714" font-family="Liberation Sans" font-size="18" fill="#b8b8b8">6.06</text>';
  h+='<circle cx="67" cy="710" r="10" fill="#f0c010"/><circle cx="63.5" cy="707" r="1.4" fill="#553300"/><circle cx="70.5" cy="707" r="1.4" fill="#553300"/><path d="M61 712q6 6 12 0" fill="none" stroke="#553300" stroke-width="1.5"/>';
  // markers
  h+='<rect x="571" y="718" width="19" height="20" fill="#8a4a14"/><text x="580.5" y="734" text-anchor="middle" font-family="Noto Sans CJK SC" font-size="17" fill="#f4e0c8">榜</text>';
  h+='<rect x="797" y="718" width="19" height="20" fill="#1f5fa0"/><text x="806.5" y="734" text-anchor="middle" font-family="Noto Sans CJK SC" font-size="17" fill="#d8e8f8">财</text>';
  h+='<path d="M1094 720l-4 5h8z" fill="#f01010"/><text x="1094" y="737" text-anchor="middle" font-family="Liberation Sans" font-weight="700" font-size="15" fill="#f01010">S</text>';
  // watermark
  h+='<text x="898" y="708" font-family="Noto Sans CJK SC" font-size="31" fill="#b00000">公式在线</text>';
  h+='<text x="1039" y="708" font-family="Liberation Sans" font-weight="700" font-size="28.6" fill="#b00000">www.gszx.com.cn</text>';
  // top-right icons
  h+='<path d="M1668 74L1676 82L1668 90L1660 82Z" fill="none" stroke="#888" stroke-width="1.3"/>';
  h+='<rect x="1689" y="74" width="15" height="15" rx="3" fill="none" stroke="#888" stroke-width="2"/><rect x="1697" y="77" width="4" height="9" fill="#aaa"/>';
  document.getElementById('mainChart').innerHTML=h;
}

var vols9=[['c',1257],['c',1210],['c',1030],['c',1150],['r',985],['r',1010],['r',1160],['r',1002],['r',1211],['r',1198],['r',1288],['r',1202],['c',1099],['r',1195],['r',1108],['r',1036],['c',1278],['r',1104],['r',1267],['r',1215],['r',1224],['r',1245],['r',740],['r',775],['r',1057],['r',87],['c',440],['r',351],['r',860],['r',827],['c',910],['r',1177],['r',518],['r',792],['c',885],['r',655],['r',870],['c',914],['c',555],['c',1000],['c',1095],['r',1211],['c',1287],['c',1210],['c',1176],['r',1163],['c',1262],['r',1254],['c',1190],['r',1339],['r',1275],['r',1356],['r',1267],['c',1292],['c',1373],['r',1312],
['r',1245],['c',1317],['r',1108],['c',777],['r',1135],['c',1295],['r',1280],['r',1292],['r',1237],['c',1338],['c',1343],['r',1340],['c',1300],['c',1290],['r',1254],['c',1365],['c',1410],['c',1432],['r',1382],['c',1365],['c',1410],['c',1390],['c',1322],['c',1370],['c',1406],['r',1365],['c',1410],['r',1438],['r',1438],['r',1421],['r',1340],['r',1378],['c',1416],['c',1441],['r',1446],['r',1441],['r',1435],['c',1441],['r',1400],['r',1365],['c',1432],['c',1425],['r',1438],['r',1413],['r',1395],['c',1428],['r',1413],['c',1382],['c',1445],['r',1408],['c',1437],['c',1420],['r',1456],['r',1498]];

var vm5=v9([12,1137,40,1190,67,1178,98,1182,125,1120,153,1075,181,1067,208,1062,236,1075,264,1125,292,1172,319,1180,347,1197,375,1197,405,1175,433,1130,460,1140,488,1142,516,1155,543,1180,571,1220,599,1212,627,1140,654,1038,682,1010,709,770,740,630,767,545,795,562,823,515,850,680,878,825,906,860,934,845,961,857,989,805,1017,745,1047,830,1075,780,1102,795,1130,880,1158,960,1185,1040,1213,1160,1241,1195,1269,1213,1296,1222,1324,1215,1354,1213,1382,1240,1410,1268,1438,1285,1465,1285,1492,1305,1520,1318,1548,1322])
.concat(v10([7,1300,31,1310,56,1270,83,1140,108,1117,133,1126,158,1122,182,1150,207,1250,232,1290,257,1302,281,1310,307,1315,331,1322,356,1305,383,1310,408,1320,432,1352,457,1372,482,1393,507,1400,531,1390,556,1375,581,1370,606,1385,631,1368,658,1375,682,1400,707,1413,732,1413,757,1408,782,1405,806,1398,831,1402,856,1410,881,1425,906,1438,932,1443,957,1435,982,1413,1007,1418,1032,1412,1056,1412,1081,1412,1106,1420,1131,1420,1156,1416,1180,1412,1205,1413,1232,1418,1256,1418,1281,1420,1306,1435,1328,1443]));
var vm10=v9([12,1168,40,1168,67,1155,98,1142,125,1118,153,1108,181,1130,208,1118,236,1130,264,1122,292,1125,319,1122,347,1130,375,1135,405,1148,433,1152,460,1160,488,1173,516,1178,543,1182,571,1172,599,1178,627,1140,654,1100,682,1095,709,1000,740,920,767,840,795,800,823,760,850,727,878,722,906,703,934,703,961,685,989,745,1017,790,1047,845,1075,810,1102,830,1130,848,1158,852,1185,930,1213,965,1241,995,1269,1045,1296,1085,1324,1120,1354,1190,1382,1225,1410,1240,1438,1255,1465,1250,1492,1258,1520,1280,1548,1295])
.concat(v10([7,1295,31,1297,56,1285,83,1230,108,1215,133,1212,158,1216,182,1216,207,1205,232,1203,257,1210,281,1215,307,1235,331,1290,356,1298,383,1307,408,1320,432,1332,457,1348,482,1350,507,1357,531,1362,556,1362,581,1368,606,1387,631,1387,658,1387,682,1387,707,1392,732,1395,757,1392,782,1390,806,1400,831,1402,856,1408,881,1418,906,1422,932,1422,957,1418,982,1415,1007,1420,1032,1420,1056,1422,1081,1422,1106,1418,1131,1418,1156,1415,1180,1408,1205,1412,1232,1418,1256,1418,1281,1418,1306,1422,1328,1430]));

function drawVol(){
  var h='<rect x="0" y="740" width="1786" height="2" fill="'+LINE+'"/>';
  var base=1272;
  var g=[[22000,781],[20000,824],[18000,869],[16000,914],[14000,959],[12000,1004],[10000,1048],[8000,1093],[6000,1138],[4000,1183],[2000,1228]];
  g.forEach(function(l){h+='<line x1="0" x2="1711" y1="'+l[1]+'.5" y2="'+l[1]+'.5" stroke="#b00000" stroke-dasharray="2 6"/>'});
  vols9.forEach(function(v,i){
    var x=cx(i),t=vy(v[1]);
    if(v[0]=='c')h+='<rect x="'+(x-5)+'" y="'+t.toFixed(1)+'" width="10" height="'+(base-t).toFixed(1)+'" fill="'+CY+'"/>';
    else h+='<rect x="'+(x-4.5)+'" y="'+t.toFixed(1)+'" width="9" height="'+(base-t).toFixed(1)+'" fill="#000" stroke="'+RED+'" stroke-width="1.3"/>';
  });
  h+=poly(vm10,'#d8d800',1.5)+poly(vm5,'#e8e8e8',1.2);
  h+='<rect x="1711" y="740" width="2" height="542" fill="'+LINE+'"/>';
  g.forEach(function(l,i){
    h+='<line x1="1713" x2="1722" y1="'+l[1]+'.5" y2="'+l[1]+'.5" stroke="'+LINE+'"/>';
    if(l[0]!=16000)h+='<text x="1778" y="'+(l[1]+7)+'" text-anchor="end" font-family="Liberation Sans" font-size="18" fill="#e83030">'+l[0]+'</text>';
    h+='<line x1="1713" x2="1717" y1="'+(l[1]+22.5)+'" y2="'+(l[1]+22.5)+'" stroke="'+LINE+'"/>';
  });
  h+='<rect x="1712" y="903" width="74" height="23" fill="#000080" stroke="#c00000" stroke-width="1.5"/><text x="1714" y="921" font-family="Liberation Sans" font-size="18" fill="#d0d0d0">15460</text>';
  h+='<rect x="1712" y="1259" width="39" height="22" fill="#000" stroke="'+LINE+'" stroke-width="1.3"/><text x="1714" y="1277" font-family="Liberation Sans" font-size="17.5" fill="#c04040">X10</text>';
  document.getElementById('volChart').innerHTML=h;
}

function drawTime(){
  var h='<rect x="0" y="1282" width="1786" height="2" fill="'+LINE+'"/>';
  [377,456,611,686,914,1065,1213,1285,1357].forEach(function(x){h+='<line x1="'+x+'.5" x2="'+x+'.5" y1="1284" y2="1288" stroke="'+LINE+'"/>'});
  [[218,'3'],[534,'4'],[1140,'6'],[1429,'7']].forEach(function(t){
    h+='<line x1="'+t[0]+'.5" x2="'+t[0]+'.5" y1="1284" y2="1305" stroke="'+LINE+'"/>';
    h+='<text x="'+(t[0]+2)+'" y="1301" font-family="Liberation Sans" font-size="18" fill="#e83030">'+t[1]+'</text>';
  });
  h+='<text x="6" y="1301" font-family="Liberation Sans,Noto Sans CJK SC" font-size="18" fill="#e83030">2024年</text>';
  h+='<rect x="759" y="1284" width="116" height="21" fill="#000090" stroke="'+LINE+'"/><text x="760" y="1301" font-family="Liberation Sans,Noto Sans CJK SC" font-size="17.6" fill="#d8d8d8">2024/04/24/三</text>';
  h+='<line x1="1712" x2="1712" y1="1284" y2="1305" stroke="'+LINE+'" stroke-width="2"/>';
  h+='<text x="1748.5" y="1301" text-anchor="middle" font-family="Noto Sans CJK SC" font-size="18" font-weight="300" fill="#c0c0c0">日线</text>';
  document.getElementById('timeAxis').innerHTML=h;
}

var trades=[['10:02','16.40',1,'B',1],['10:03','16.38',11,'S',2],['10:03','16.38',1,'B',1],['10:03','16.36',46,'S',3],['10:03','16.36',2,'S',1],['10:03','16.35',3,'S',1],['10:04','16.35',2,'B',1],['10:04','16.35',16,'B',6],['10:04','16.34',4,'S',1],['10:04','16.34',46,'B',9],['10:04','16.36',12,'B',4],['10:04','16.34',32,'S',3],['10:05','16.37',1,'B',1],['10:05','16.37',1,'B',1],['10:06','16.36',1,'S',1],['10:07','16.34',40,'S',8],['10:08','16.36',2,'B',1],['10:08','16.36',1,'B',1],['10:08','16.33',13,'S',2],['10:08','16.36',1,'B',1],['10:09','16.36',1,'B',1]];
function drawTrades(){
  var h='';
  trades.forEach(function(t){
    var pc=t[1]=='16.33'?'w':'r';
    h+='<div class="trow"><span class="tm">'+t[0]+'</span><span class="pr '+pc+'">'+t[1]+'</span><span class="qt">'+t[2]+'</span><span class="bs bs-'+t[3].toLowerCase()+'">'+t[3]+'</span><span class="cn">'+t[4]+'</span></div>';
  });
  document.getElementById('trades').innerHTML=h;
}
drawMain();drawVol();drawTime();drawTrades();
```
